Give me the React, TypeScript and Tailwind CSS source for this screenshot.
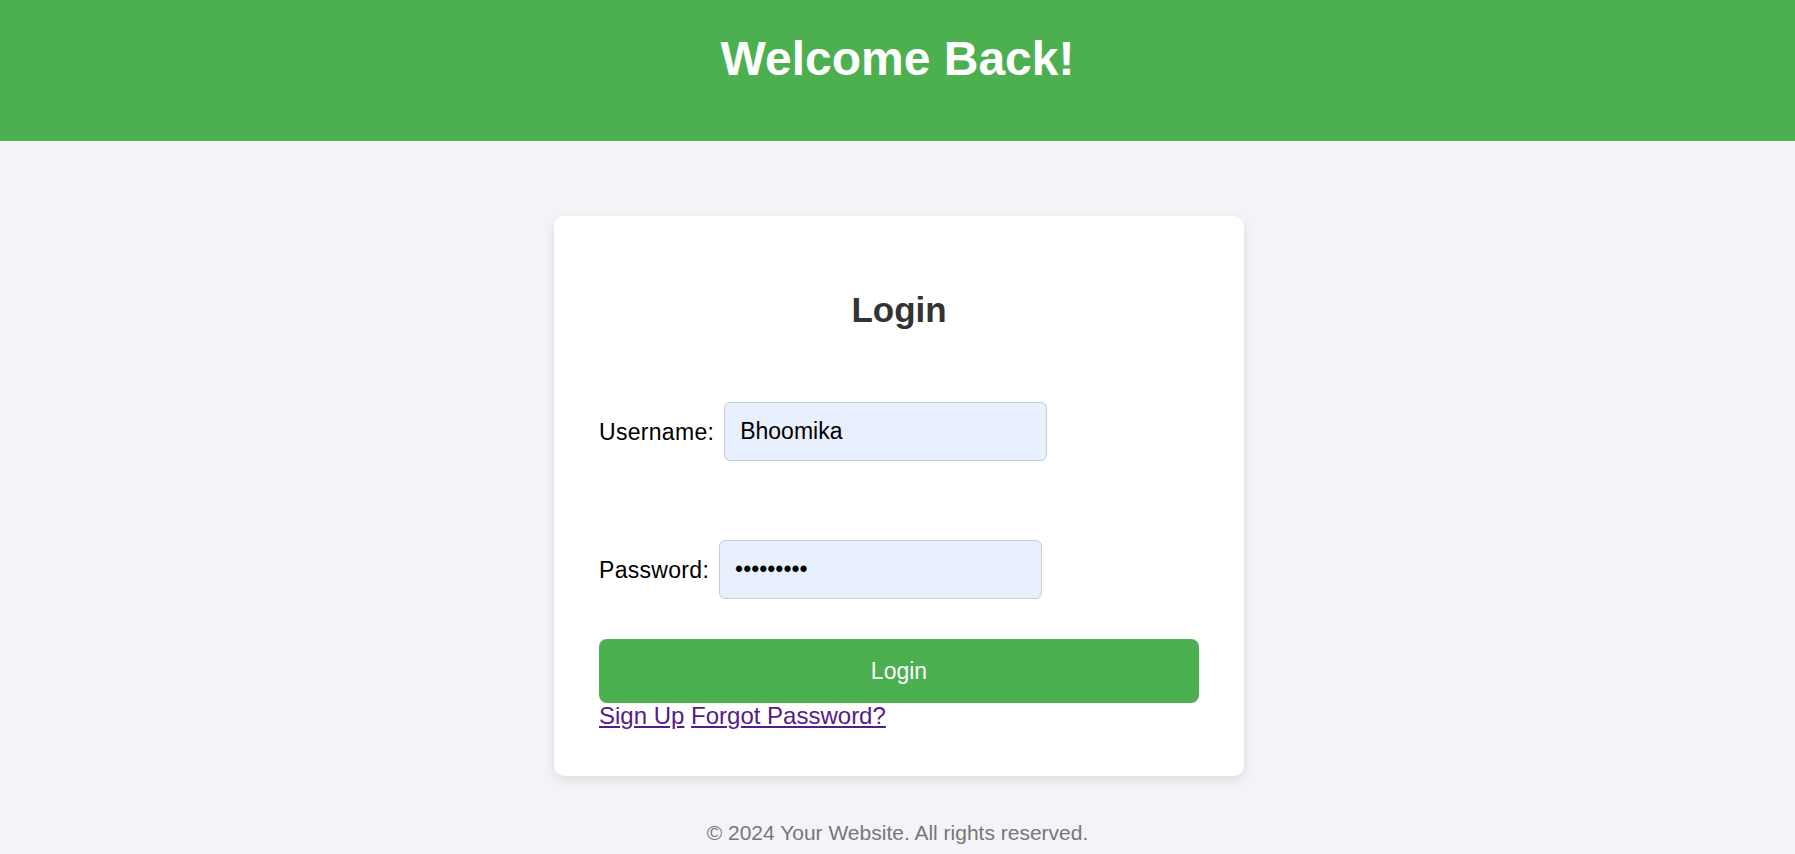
import { useState } from "react";

export default function App() {
  const [username, setUsername] = useState("Bhoomika");
  const [password, setPassword] = useState("123456789");

  return (
    <div className="min-h-screen bg-[#f4f4f8] font-['Liberation_Sans',Arial,sans-serif] text-black">
      <header className="h-[141px] bg-[#4caf50] pt-[31px] text-center">
        <h1 className="text-[48px] font-bold leading-[1.15] text-white">Welcome Back!</h1>
      </header>

      <main className="flex justify-center pt-[75px] pl-[3px]">
        <div className="w-[690px] rounded-[10px] bg-white px-[45px] pt-[74px] pb-[46px] shadow-[0_4px_12px_rgba(0,0,0,0.1)]">
          <h2 className="text-center text-[35px] font-bold leading-[1.15] text-[#333]">Login</h2>

          <form className="mt-[72px] flex flex-col" onSubmit={(e) => e.preventDefault()}>
            <div className="flex items-center text-[23px]">
              <label htmlFor="username" className="tracking-[0.3px]">Username:</label>
              <input
                id="username"
                type="text"
                value={username}
                onChange={(e) => setUsername(e.target.value)}
                className="ml-[10px] h-[59px] w-[323px] rounded-[6px] border border-[#c9ccd3] bg-[#e8f0fe] px-[15px] text-[23px] text-black outline-none"
              />
            </div>

            <div className="mt-[79px] flex items-center text-[23px]">
              <label htmlFor="password" className="tracking-[0.3px]">Password:</label>
              <input
                id="password"
                type="password"
                value={password}
                onChange={(e) => setPassword(e.target.value)}
                className="ml-[10px] h-[59px] w-[323px] rounded-[6px] border border-[#c9ccd3] bg-[#e8f0fe] px-[15px] text-[23px] text-black outline-none"
              />
            </div>

            <button
              type="submit"
              className="mt-[40px] h-[64px] w-full rounded-[8px] bg-[#4caf50] text-[23px] text-white"
            >
              Login
            </button>
          </form>

          <div className="text-[24px] leading-[1.1]">
            <a href="#" className="text-[#551a8b] underline">Sign Up</a>{" "}
            <a href="#" className="text-[#551a8b] underline">Forgot Password?</a>
          </div>
        </div>
      </main>

      <footer className="pt-[45px] text-center text-[21px] leading-[1.15] text-[#777]">
        © 2024 Your Website. All rights reserved.
      </footer>
    </div>
  );
}
